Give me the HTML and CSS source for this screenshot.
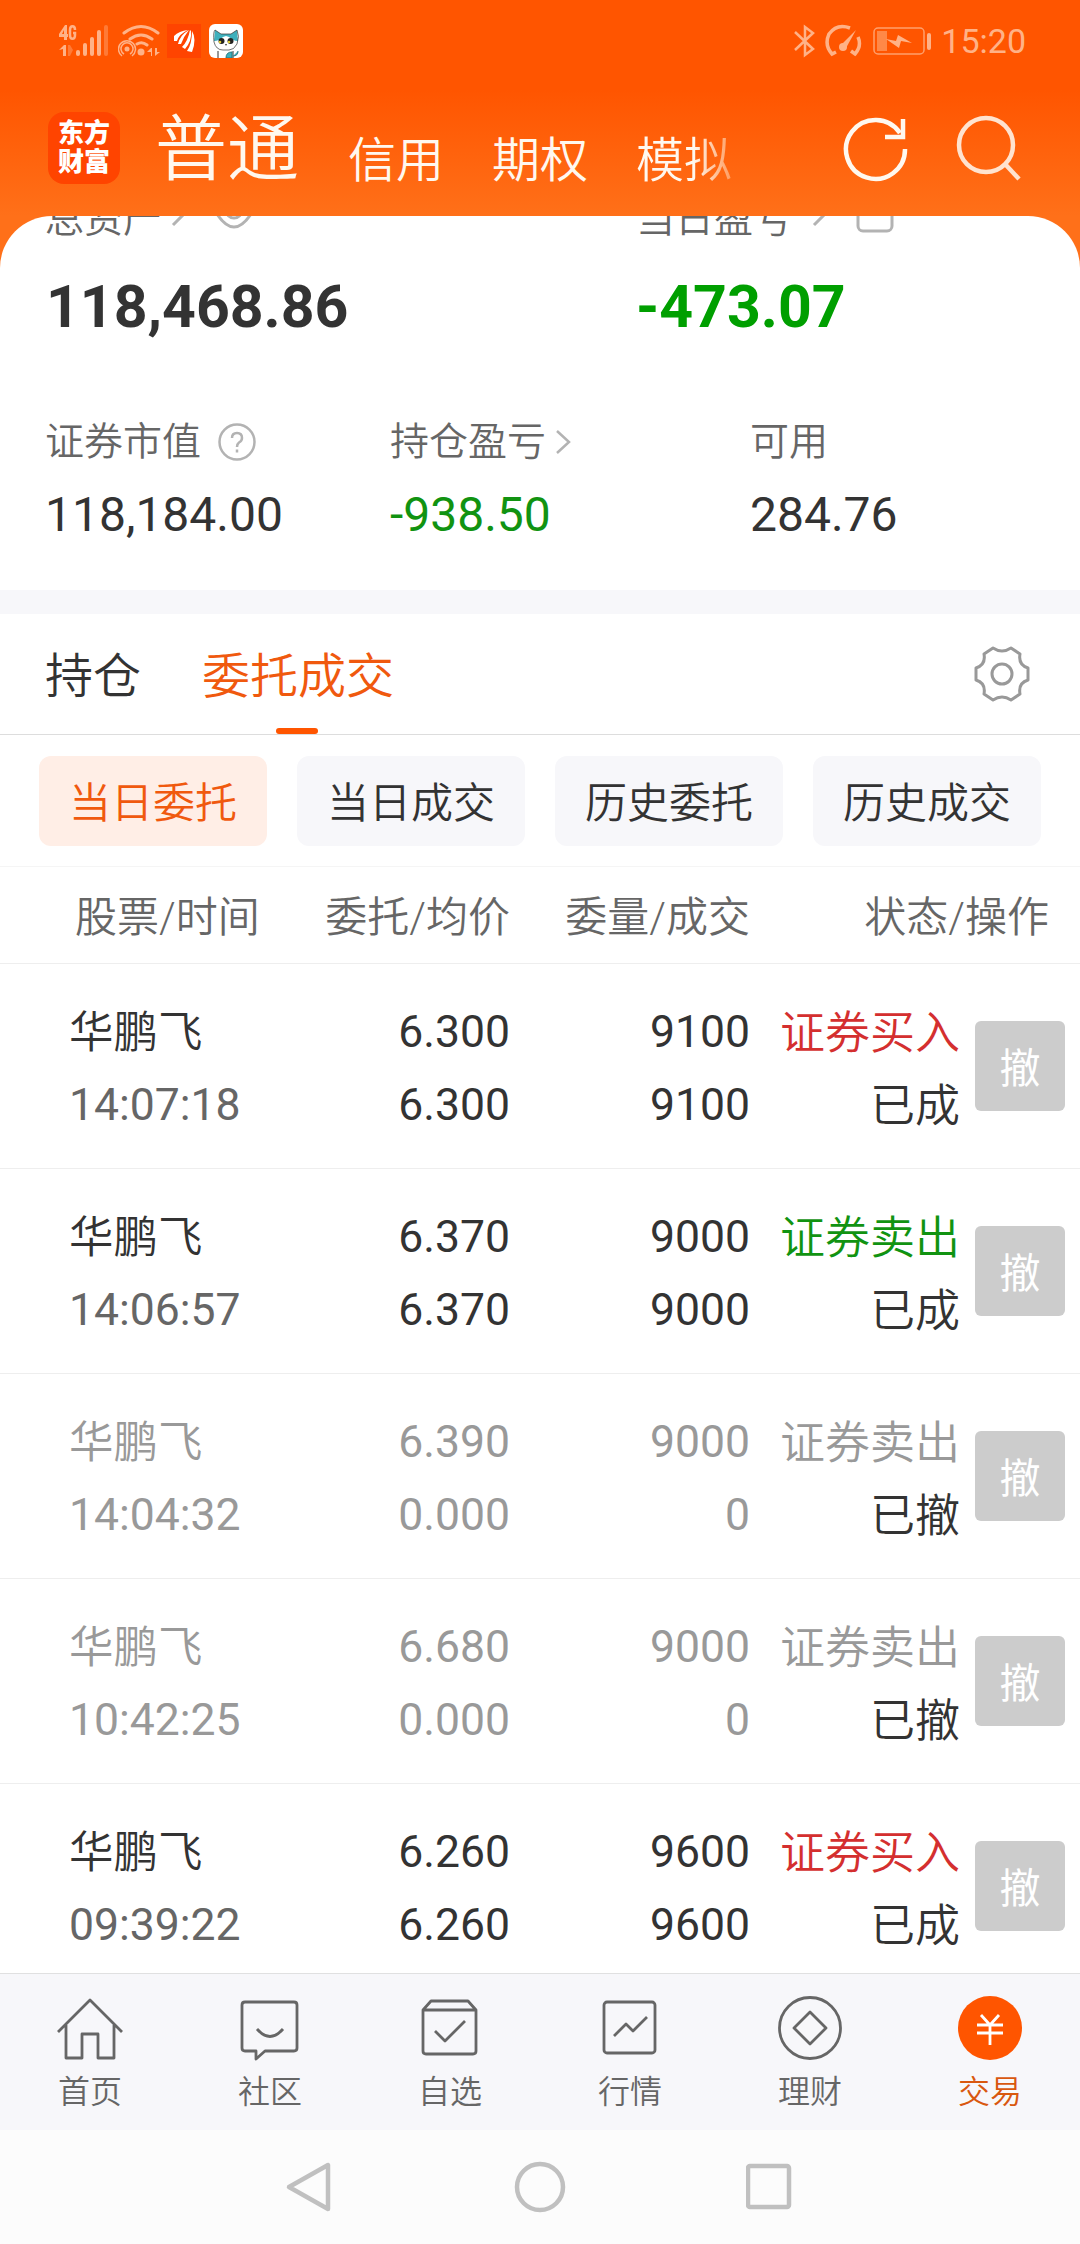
FILE: index.html
```
<!DOCTYPE html>
<html lang="zh-CN">
<head>
    <meta charset="UTF-8">
    <meta name="viewport" content="width=device-width, initial-scale=1.0">
    <title>交易 - 委托成交</title>
    <link rel="stylesheet" href="styles.css">
</head>
<body>
    <header class="top">
        <!-- Barra de estado -->
        <div class="status">
            <div class="status-left">
                <svg width="51" height="34" viewBox="0 0 51 34" fill="#ffb287">
                    <path d="M6 1L0 10v3h5v3h3v-3h1v-3H8V1zM5 6v4H3z"/>
                    <path d="M16 6c0-5-5-5-5 0v5c0 5 5 5 5 0V9h-2" fill="none" stroke="#ffb287" stroke-width="2.500"/>
                    <path d="M0 26l5-5h2v11H4v-7z"/>
                    <path d="M9 21h2l3 5-3 6H9z" opacity=".4"/>
                    <rect x="17" y="26" width="4" height="6" rx="2"/>
                    <rect x="24" y="19" width="4" height="13" rx="2"/>
                    <rect x="31" y="13" width="4" height="19" rx="2"/>
                    <rect x="38" y="6" width="4" height="26" rx="2"/>
                    <rect x="45" y="1" width="4" height="31" rx="2" opacity=".4"/>
                </svg>
                <svg class="wifi" width="43" height="34" viewBox="0 0 43 34" fill="none" stroke="#ffb287" stroke-width="3">
                    <path d="M6 9q17-13 34 0M12 15q11-8 22 0M19 20q5-3 10 1" stroke-linecap="round"/>
                    <circle cx="9" cy="25" r="2.500" fill="#ffb287" stroke="none"/>
                    <path d="M6 30a6 6 0 1 1 6 0M4 32a8.500 8.500 0 1 1 10 0" stroke-width="1.500"/>
                    <circle cx="23" cy="28" r="3.500" fill="#ffb287" stroke="none"/>
                    <path d="M29 28l4-4h1v8h-1v-4zM37 24v8l5-4h-3v-4z" fill="#ffb287" stroke="none"/>
                </svg>
                <svg class="app-a" width="34" height="34" viewBox="0 0 34 34">
                    <rect width="34" height="34" fill="#ff4400"/>
                    <path d="M7 17V12Q12 7 21 6 12 10 10 17zM11 20Q13 11 22 6 17 12 14 20zM15 23Q21 17 23 6l1 1Q25 17 18 25zM20 27Q25 20 25 7q5 8 0 21z" fill="#fff"/>
                </svg>
                <svg width="34" height="34" viewBox="0 0 34 34">
                    <rect width="34" height="34" rx="6" fill="#fff"/>
                    <path d="M5 17L6 6l6 4h10l6-4 1 11q-5 0-9-4l-3-1-3 1q-4 4-9 4z" fill="#3eb0bd"/>
                    <path d="M5 18Q4 8 6 6l6 4h10l6-4q3 6 0 14-3 6-8 6h-6q-7 0-9-8z" fill="none" stroke="#333" stroke-width=".7"/>
                    <circle cx="12.500" cy="17" r="3" fill="#222"/><circle cx="21.500" cy="17" r="3" fill="#222"/>
                    <circle cx="11" cy="18" r="1.300" fill="#dc3"/><circle cx="20" cy="18" r="1.300" fill="#dc3"/>
                    <path d="M16 20h2l-1 2z" fill="#333"/>
                    <path d="M9 34v-7M24 27v7" stroke="#333"/>
                    <path d="M17 34q0-6 6-6v6zM24 32q5 0 5-5" fill="#3eb0bd" stroke="#25777f"/>
                </svg>
            </div>
            <div class="status-right">
                <svg width="22" height="34" viewBox="0 0 22 34" fill="none" stroke="#ffb287" stroke-width="2.500">
                    <path d="M1 8l18 17-8 6V3l8 6L1 26"/>
                </svg>
                <svg class="gauge" width="38" height="34" viewBox="0 0 38 34" fill="none" stroke="#ffb287" stroke-width="3.500">
                    <path d="M26 4Q13-1 5 10q-5 11 3 20l4-2M34 13q4 9-3 17l-4-3"/>
                    <path d="M17 21L32 6 22 24z" fill="#ffb287" stroke="none"/>
                    <circle cx="19" cy="23" r="4" fill="#ffb287" stroke="none"/>
                </svg>
                <svg class="battery" width="60" height="30" viewBox="0 0 60 30">
                    <rect x="1" y="2" width="50" height="26" rx="4" fill="none" stroke="#ffa06c" stroke-width="1.500"/>
                    <rect x="4" y="5" width="10" height="20" fill="#ff8847"/>
                    <path d="M13 13l10 2 2-6 14 8-11-2-2 7z" fill="#ffb287"/>
                    <rect x="54" y="7" width="4" height="17" rx="2" fill="#ffb287"/>
                </svg>
                <span class="time">15:20</span>
            </div>
        </div>
        <!-- Menú principal -->
        <div class="menu">
            <div class="logo"><span>东方</span><span>财富</span></div>
            <nav class="menu-tabs">
                <span class="menu-main">普通</span>
                <span>信用</span>
                <span>期权</span>
                <span class="fade">模拟</span>
            </nav>
            <svg class="refresh" width="66" height="70" viewBox="0 0 66 70" fill="none" stroke="#fff8ef" stroke-width="4.500">
                <path d="M62 35A29.500 29.500 0 1 1 57 19"/>
                <path d="M60 5v18H42"/>
            </svg>
            <svg class="search" width="66" height="70" viewBox="0 0 66 70" fill="none" stroke="#ffe3cf" stroke-width="4.500">
                <circle cx="30" cy="31" r="27"/>
                <path d="M49 50l14 15"/>
            </svg>
        </div>
    </header>

    <section class="account">
        <div class="cut">
            <div class="cut-item">
                <span>总资产</span>
                <svg width="20" height="32" viewBox="0 0 20 32"><path d="M5 3l11 13L4 28"/></svg>
                <svg class="eye" width="44" height="44" viewBox="0 0 44 44"><path d="M2 20Q22-10 42 20 22 56 2 20z"/><circle cx="22" cy="21" r="8"/></svg>
            </div>
            <div class="cut-item profit">
                <span>当日盈亏</span>
                <svg width="20" height="32" viewBox="0 0 20 32"><path d="M5 3l11 13L4 28"/></svg>
                <svg class="share" width="38" height="36" viewBox="0 0 38 36"><rect x="2" y="2" width="34" height="32" rx="5"/></svg>
            </div>
        </div>
        <div class="totals">
            <span>118,468.86</span>
            <span class="green">-473.07</span>
        </div>
        <div class="details">
            <div>
                <p class="label"><span>证券市值</span>
                    <svg class="help" width="38" height="38" viewBox="0 0 38 38" fill="none" stroke="#b3b3b3" stroke-width="2.500">
                        <circle cx="19" cy="19" r="17.500"/>
                        <path d="M14 15q0-5 5-5t5 5q0 3-3 4.500-2 1.500-2 4.500M19 26.500v3"/>
                    </svg>
                </p>
                <p class="value">118,184.00</p>
            </div>
            <div>
                <p class="label"><span>持仓盈亏</span>
                    <svg class="chevron" width="18" height="28" viewBox="0 0 18 28" fill="none" stroke="#b3b3b3" stroke-width="2.500">
                        <path d="M3 3l12 11L3 25"/>
                    </svg>
                </p>
                <p class="value green-soft">-938.50</p>
            </div>
            <div>
                <p class="label"><span>可用</span></p>
                <p class="value">284.76</p>
            </div>
        </div>
    </section>

    <div class="tabs">
        <span>持仓</span>
        <span class="active">委托成交</span>
        <svg class="gear" width="58" height="58" viewBox="-29 -29 58 58" fill="none" stroke="#999" stroke-width="3">
            <path d="M-9-26Q0-20 9-26L18-20Q16-9 26-6V6Q16 9 18 20L9 26Q0 20-9 26L-18 20Q-16 9-26 6V-6Q-16-9-18-20z" stroke-linejoin="round"/>
            <circle r="10"/>
        </svg>
    </div>

    <div class="chips">
        <span class="chip on">当日委托</span>
        <span class="chip">当日成交</span>
        <span class="chip">历史委托</span>
        <span class="chip">历史成交</span>
    </div>

    <div class="grid head">
        <span>股票/时间</span>
        <span>委托/均价</span>
        <span>委量/成交</span>
        <span>状态/操作</span>
    </div>

    <!-- Lista de órdenes -->
    <main class="orders">
        <div class="grid order">
            <div><p class="name">华鹏飞</p><p class="hour">14:07:18</p></div>
            <div><p>6.300</p><p>6.300</p></div>
            <div><p>9100</p><p>9100</p></div>
            <div><p class="side buy">证券买入</p><p class="state">已成</p></div>
            <button>撤</button>
        </div>
        <div class="grid order">
            <div><p class="name">华鹏飞</p><p class="hour">14:06:57</p></div>
            <div><p>6.370</p><p>6.370</p></div>
            <div><p>9000</p><p>9000</p></div>
            <div><p class="side sell">证券卖出</p><p class="state">已成</p></div>
            <button>撤</button>
        </div>
        <div class="grid order cancelled">
            <div><p class="name">华鹏飞</p><p class="hour">14:04:32</p></div>
            <div><p>6.390</p><p>0.000</p></div>
            <div><p>9000</p><p>0</p></div>
            <div><p class="side">证券卖出</p><p class="state">已撤</p></div>
            <button>撤</button>
        </div>
        <div class="grid order cancelled">
            <div><p class="name">华鹏飞</p><p class="hour">10:42:25</p></div>
            <div><p>6.680</p><p>0.000</p></div>
            <div><p>9000</p><p>0</p></div>
            <div><p class="side">证券卖出</p><p class="state">已撤</p></div>
            <button>撤</button>
        </div>
        <div class="grid order">
            <div><p class="name">华鹏飞</p><p class="hour">09:39:22</p></div>
            <div><p>6.260</p><p>6.260</p></div>
            <div><p>9600</p><p>9600</p></div>
            <div><p class="side buy">证券买入</p><p class="state">已成</p></div>
            <button>撤</button>
        </div>
    </main>

    <!-- Navegación inferior -->
    <nav class="bottom">
        <div class="item">
            <svg width="68" height="68" viewBox="0 0 68 68"><path d="M2 39L34 7l32 32M10 32v33h16V41h16v24h16V32"/></svg>
            <span>首页</span>
        </div>
        <div class="item">
            <svg width="68" height="68" viewBox="0 0 68 68"><path d="M9 9h49q3 0 3 3v43q0 3-3 3H29l-9 8v-8H9q-3 0-3-3V12q0-3 3-3zM21 36q13 15 26 0"/></svg>
            <span>社区</span>
        </div>
        <div class="item">
            <svg width="68" height="68" viewBox="0 0 68 68"><path d="M7 17l8-9h37l8 9v41q0 3-3 3H10q-3 0-3-3zh53M19 38l10 10 20-20"/></svg>
            <span>自选</span>
        </div>
        <div class="item">
            <svg width="68" height="68" viewBox="0 0 68 68"><rect x="8" y="9" width="51" height="51" rx="3"/><path d="M18 43l12-12 7 7 14-14"/></svg>
            <span>行情</span>
        </div>
        <div class="item">
            <svg width="68" height="68" viewBox="0 0 68 68"><circle cx="34" cy="35" r="30.500"/><path d="M34 19l16 16-16 16-16-16z"/></svg>
            <span>理财</span>
        </div>
        <div class="item current">
            <svg width="68" height="68" viewBox="0 0 68 68"><circle class="coin" cx="34" cy="35" r="32"/><path class="yen" d="M25 22l9 10 9-10M21 32h26M21 40h26M34 32v20"/></svg>
            <span>交易</span>
        </div>
    </nav>

    <footer class="system">
        <svg width="50" height="54" viewBox="0 0 50 54"><path d="M44 5v44L5 27z"/></svg>
        <svg width="54" height="54" viewBox="0 0 54 54"><circle cx="27" cy="27" r="23"/></svg>
        <svg width="50" height="54" viewBox="0 0 50 54"><rect x="2" y="6" width="41" height="41" rx="2"/></svg>
    </footer>
</body>
</html>
```
FILE: styles.css
```
* {
    box-sizing: border-box;
}
body {
    margin: 0;
    width: 1080px;
    height: 2244px;
    overflow: hidden;
    display: flex;
    flex-direction: column;
    font-family: Roboto, "Noto Sans CJK SC", sans-serif;
    color: #333;
    background-color: #fff;
}
p {
    margin: 0;
}
svg {
    display: block;
    flex-shrink: 0;
}
/* cabecera */
.top {
    height: 270px;
    flex-shrink: 0;
    background: linear-gradient(#ff5500 90px, #ff7019 216px);
}
.status {
    height: 82px;
    padding: 0 54px 0 59px;
    display: flex;
    justify-content: space-between;
    align-items: center;
}
.status-left, .status-right {
    display: flex;
    align-items: center;
}
.wifi {
    margin-left: 8px;
}
.app-a {
    margin: 0 8px 0 6px;
}
.gauge {
    margin-left: 8px;
}
.battery {
    margin: 0 8px 0 11px;
}
.time {
    font-size: 34px;
    color: #ffb287;
}
.menu {
    height: 134px;
    padding-left: 48px;
    display: flex;
    align-items: flex-start;
}
.logo {
    width: 72px;
    height: 72px;
    margin-top: 30px;
    padding-top: 7px;
    border-radius: 16px;
    background-color: #ff4400;
    color: #fff;
    font-size: 26px;
    font-weight: 900;
    line-height: 29px;
    text-align: center;
}
.logo span {
    display: block;
}
.menu-tabs {
    width: 688px;
    margin: 16px 0 0 35px;
    display: flex;
    gap: 48px;
    align-items: flex-start;
    font-size: 48px;
    font-weight: 350;
    line-height: 126px;
    color: #fff8ef;
}
.menu-main {
    font-size: 72px;
    line-height: 104px;
    margin-right: 1px;
}
.fade {
    background: linear-gradient(90deg, #fff8ef 60%, #ff9a5c);
    -webkit-background-clip: text;
    background-clip: text;
    color: transparent;
}
.refresh {
    margin-top: 32px;
}
.search {
    margin: 32px 0 0 47px;
}
/* cuenta */
.account {
    height: 374px;
    margin-top: -54px;
    flex-shrink: 0;
    border-radius: 52px 52px 0 0;
    background-color: #fff;
    overflow: hidden;
}
.cut {
    height: 40px;
    padding-left: 45px;
    display: flex;
    align-items: flex-end;
    font-size: 39px;
    font-weight: 350;
    line-height: 56px;
    color: #666;
}
.cut-item {
    width: 591px;
    height: 72px;
    flex-shrink: 0;
    display: flex;
    align-items: center;
}
.cut span {
    margin-top: -2px;
}
.cut svg {
    margin: 0 0 14px 7px;
    fill: none;
    stroke: #b3b3b3;
    stroke-width: 3;
}
.cut .eye {
    margin: 0 0 18px 23px;
}
.cut .profit svg {
    margin-left: 18px;
}
.cut .profit .share {
    margin: 0 0 10px 26px;
}
.totals {
    height: 101px;
    padding-left: 46px;
    display: flex;
    font-size: 59px;
    font-weight: bold;
    line-height: 102px;
}
.totals span {
    width: 590px;
    flex-shrink: 0;
}
.green {
    color: #009f00;
}
.green-soft {
    color: #119311;
}
.details {
    padding: 56px 0 0 45px;
    display: grid;
    grid-template-columns: 345px 360px 1fr;
}
.label {
    height: 58px;
    display: flex;
    align-items: center;
    font-size: 39px;
    font-weight: 350;
    color: #666;
}
.label span {
    line-height: 58px;
}
.help {
    margin-left: 17px;
}
.chevron {
    margin-left: 8px;
}
.value {
    height: 86px;
    font-size: 48px;
    line-height: 88px;
}
/* pestañas */
.tabs {
    height: 145px;
    flex-shrink: 0;
    padding: 0 49px 0 45px;
    display: flex;
    align-items: center;
    border-top: 24px solid #f7f7fa;
    border-bottom: 1px solid #ddd;
    font-size: 48px;
    font-weight: 350;
    line-height: 120px;
}
.tabs .active {
    position: relative;
    margin-left: 61px;
    color: #f0590e;
}
.tabs .active::after {
    content: "";
    position: absolute;
    left: 74px;
    bottom: 0;
    width: 42px;
    height: 6px;
    border-radius: 3px;
    background-color: #ff5500;
}
.tabs > span {
    height: 120px;
    padding-top: 3px;
}
.gear {
    margin-left: auto;
}
.chips {
    height: 132px;
    flex-shrink: 0;
    padding: 21px 39px 0;
    display: grid;
    grid-template-columns: repeat(4, 1fr);
    gap: 30px;
    border-bottom: 1px solid #f5f5f5;
}
.chip {
    height: 90px;
    border-radius: 12px;
    background-color: #f7f7fa;
    font-size: 42px;
    font-weight: 350;
    line-height: 95px;
    text-align: center;
}
.chip.on {
    background-color: #ffeee6;
    color: #f0590e;
}
/* tabla */
.grid {
    display: grid;
    padding-left: 69px;
    text-align: right;
}
.grid > :first-child {
    text-align: left;
}
.head {
    height: 97px;
    flex-shrink: 0;
    grid-template-columns: 240px 195px 240px 299px;
    padding-left: 75px;
    border-bottom: 1px solid #eee;
    font-size: 42px;
    font-weight: 350;
    line-height: 102px;
    color: #666;
}
.orders {
    height: 1009px;
    flex-shrink: 0;
    overflow: hidden;
}
.order {
    height: 205px;
    padding-top: 32px;
    grid-template-columns: 240px 201px 240px 210px 90px;
    border-bottom: 1px solid #eee;
    font-size: 44.5px;
    line-height: 73px;
}
.order p {
    height: 73px;
}
.order .name, .order .side, .order .state {
    font-weight: 350;
    line-height: 75px;
}
.order .side, .order .state {
    font-size: 45px;
}
.order button {
    width: 90px;
    height: 90px;
    margin: 25px 0 0 15px;
    padding: 0 0 2px;
    border: none;
    border-radius: 6px;
    background-color: #ccc;
    color: #fff;
    font-family: inherit;
    font-size: 41px;
}
.hour {
    color: #666;
}
.buy {
    color: #d42f2f;
}
.sell {
    color: #119311;
}
.cancelled, .cancelled .hour {
    color: #999;
}
.cancelled .state {
    color: #333;
}
/* navegación */
.bottom {
    height: 157px;
    flex-shrink: 0;
    display: grid;
    grid-template-columns: repeat(6, 1fr);
    border-top: 1px solid #e0e0e0;
    background-color: #f7f7fa;
}
.item {
    padding-top: 19px;
    display: flex;
    flex-direction: column;
    align-items: center;
    font-size: 32px;
    font-weight: 350;
    line-height: 62px;
    color: #666;
}
.item svg {
    fill: none;
    stroke: #666;
    stroke-width: 2.8;
    stroke-linejoin: round;
}
.item .coin {
    fill: #ff5500;
    stroke: none;
}
.item .yen {
    stroke: #fff;
}
.current {
    color: #d9580f;
}
.system {
    height: 114px;
    flex-shrink: 0;
    padding: 0 284px;
    display: flex;
    justify-content: space-between;
    align-items: center;
    background-color: #fcfcfc;
}
.system svg {
    fill: none;
    stroke: #c0c0c0;
    stroke-width: 4.5;
    stroke-linejoin: round;
}
```
